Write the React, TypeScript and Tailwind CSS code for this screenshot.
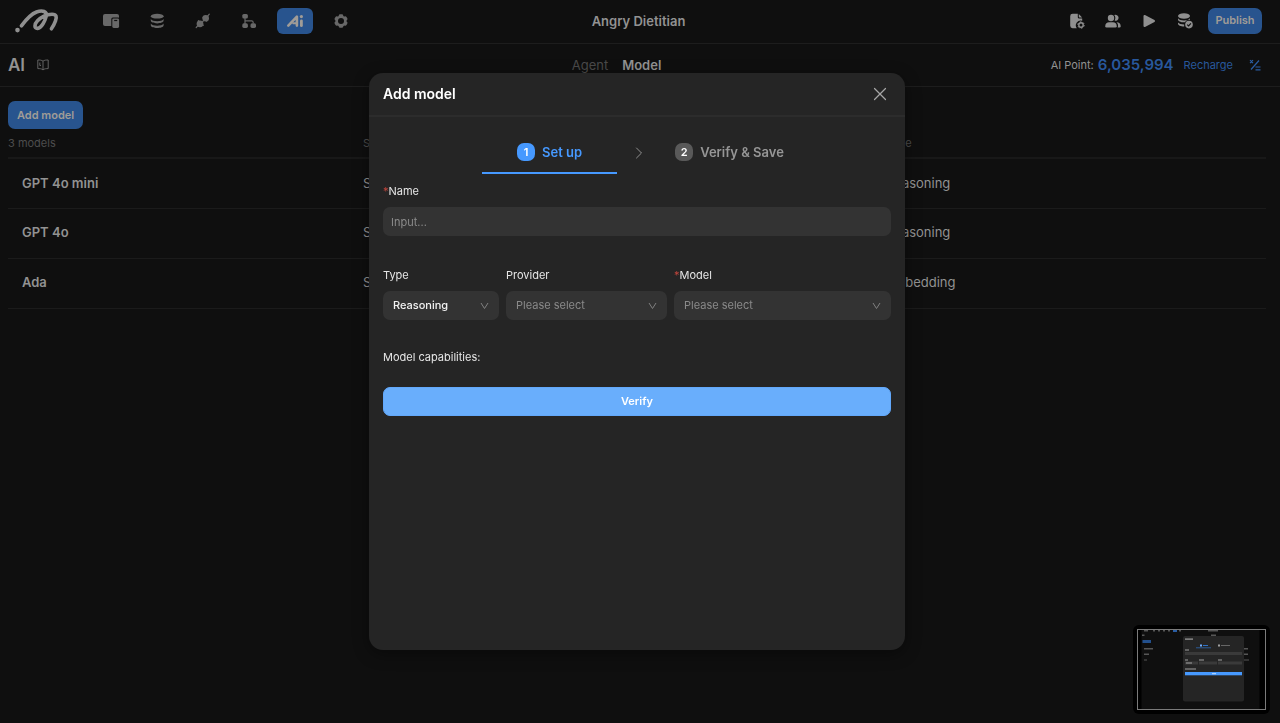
import React from "react";
import { ChevronRight, X } from "lucide-react";

const models = [
  { name: "GPT 4o mini", source: "System", type: "Reasoning" },
  { name: "GPT 4o", source: "System", type: "Reasoning" },
  { name: "Ada", source: "System", type: "Embedding" },
];

function Logo() {
  return (
    <svg width="44" height="26" viewBox="15 8 44 26" fill="none" aria-hidden="true">
      <circle cx="17.5" cy="30.1" r="2.3" fill="#8f8f8f" />
      <path
        d="M21.4 25.8C25 21 30.500 14.200 36.500 12C42.500 9.800 47.500 11.400 46.200 16.400C45 21 41.500 28 37.600 28.400C34 28.600 34.200 24.200 37.500 20.800C41.500 16.800 46.500 14.400 52 14.300C56.800 14.300 56.800 17.200 55.500 20.800C54.500 23.600 53 26.500 51.400 28.800"
        stroke="#8f8f8f"
        strokeWidth="3.6"
        strokeLinecap="round"
        strokeLinejoin="round"
      />
    </svg>
  );
}

function PagesIcon() {
  return (
    <svg width="18" height="16" viewBox="101 14 18 16" aria-hidden="true">
      <rect x="102" y="15" width="16" height="12" rx="2" fill="#686868" />
      <rect x="110.3" y="18.4" width="8.6" height="11.6" rx="1.6" fill="#0f0f0f" />
      <rect x="111.3" y="19.4" width="6.8" height="9.6" rx="1.4" fill="#686868" />
      <path d="M113.2 21.5h3" stroke="#0f0f0f" strokeWidth="1.2" />
    </svg>
  );
}

function DatabaseIcon() {
  return (
    <svg width="16" height="16" viewBox="148 13 16 16" fill="none" aria-hidden="true">
      <ellipse cx="156.2" cy="16.2" rx="6.4" ry="2.4" fill="#686868" />
      <path
        d="M149.800 19c1.500 3 11.300 3 12.800 0v1.600c0 3.700-12.800 3.700-12.800 0zM149.800 23.600c1.500 3 11.300 3 12.800 0v1.600c0 3.700-12.800 3.700-12.800 0z"
        fill="#686868"
      />
    </svg>
  );
}

function PlugIcon() {
  return (
    <svg width="16" height="16" viewBox="195 13 16 16" aria-hidden="true">
      <g fill="#686868">
        <circle cx="205.700" cy="18.300" r="3.300" />
        <circle cx="200" cy="23.800" r="3.400" />
      </g>
      <path d="M207 16.900l2.300-2.700M196.200 27.500l2-2.100M203 17.500l3.700 3.700M198.400 20.700l4.800 4.600M202.300 22l1.300-1.300" stroke="#686868" strokeWidth="1.200" strokeLinecap="round" />
    </svg>
  );
}

function FlowIcon() {
  return (
    <svg width="16" height="16" viewBox="241 13 16 16" aria-hidden="true">
      <g fill="#686868">
        <rect x="242.3" y="14" width="5.6" height="4.600" rx="1.6" />
        <rect x="242.3" y="23.300" width="5.6" height="4.600" rx="1.6" />
        <rect x="250.500" y="23.300" width="5.500" height="4.600" rx="1.6" />
      </g>
      <path d="M245 18v6M245 20.9h6.600q1.600 0 1.600 1.600v1" fill="none" stroke="#686868" strokeWidth="1.2" />
    </svg>
  );
}

function AiIcon() {
  return (
    <svg width="18" height="14" viewBox="287 14 18 14" fill="none" stroke="#a09c97" strokeLinecap="round" aria-hidden="true">
      <path d="M289.3 25.6L297.9 16.6V25.6" strokeWidth="2.6" strokeLinejoin="round" />
      <path d="M294.2 23.2h2.6" strokeWidth="2" />
      <path d="M302.4 20.8v4.9" strokeWidth="2.8" />
      <circle cx="302.4" cy="16.6" r="1.6" fill="#a09c97" stroke="none" />
    </svg>
  );
}

function GearIcon() {
  return (
    <svg width="16" height="16" viewBox="0 0 16 16" aria-hidden="true">
      <g fill="#686868">
        <rect x="5.800" y="1.200" width="4.400" height="13.600" rx="1.400" />
        <rect x="5.800" y="1.200" width="4.400" height="13.600" rx="1.400" transform="rotate(60 8 8)" />
        <rect x="5.800" y="1.200" width="4.400" height="13.600" rx="1.400" transform="rotate(120 8 8)" />
        <circle cx="8" cy="8" r="5.600" />
      </g>
      <circle cx="8" cy="8" r="3" fill="#0f0f0f" />
    </svg>
  );
}

function FileGearIcon() {
  return (
    <svg width="18" height="16" viewBox="-1 0 18 16" aria-hidden="true">
      <path d="M3.6.8h5.2v3.400a1.400 1.400 0 0 0 1.400 1.400h3v2.200a4.800 4.800 0 0 0-5.400 7.400H3.600A2.400 2.400 0 0 1 1.200 12.800V3.200A2.400 2.400 0 0 1 3.600.8z" fill="#8f8f8f" />
      <path d="M9.800 1l3.300 3.500h-2.500a.8.8 0 0 1-.8-.8z" fill="#8f8f8f" />
      <circle cx="12" cy="12" r="2.200" fill="none" stroke="#8f8f8f" strokeWidth="1.400" />
      <circle cx="12" cy="12" r="3.200" fill="none" stroke="#8f8f8f" strokeWidth="1" strokeDasharray="1.680 1.670" />
    </svg>
  );
}

function PeopleIcon() {
  return (
    <svg width="18" height="16" viewBox="0 0 18 16" fill="#8f8f8f" aria-hidden="true">
      <circle cx="7" cy="5" r="3.200" />
      <path d="M1.200 13.200c0-2.800 1.800-4 3.800-4h4c2.200 0 3.800 1.200 3.800 4 0 .8-.4 1.200-1.200 1.200H2.400c-.8 0-1.200-.4-1.200-1.200z" />
      <path d="M10.200 2.100a3 3 0 1 1 .4 5.500 4.800 4.800 0 0 0-.4-5.500z" />
      <path d="M12.400 9.200c2.800 0 4.300 1.300 4.300 4 0 .8-.4 1.200-1 1.200h-2c.8-2 .2-4-1.300-5.200z" />
    </svg>
  );
}

function PlayIcon() {
  return (
    <svg width="18" height="14" viewBox="-2 0 18 14" aria-hidden="true">
      <path d="M2.500 2v10L12 7z" fill="#8f8f8f" stroke="#8f8f8f" strokeWidth="2" strokeLinejoin="round" />
    </svg>
  );
}

function DatabaseCheckIcon() {
  return (
    <svg width="18" height="18" viewBox="0 0 18 18" aria-hidden="true">
      <g fill="#8f8f8f">
        <ellipse cx="8" cy="4" rx="6" ry="2.800" />
        <path d="M2 6.200c1.500 3 10.500 3 12 0v1.600c-2.200 0-4 .8-5 2.400-3.800.3-7-1-7-2.800z" />
        <path d="M2 10.400c.8 1.200 3.400 2 6.200 2v2.200C4.600 14.600 2 13.400 2 11.800z" />
        <circle cx="13" cy="12.600" r="3.800" />
      </g>
      <path d="M11.200 12.600l1.400 1.300 2.300-2.500" fill="none" stroke="#0f0f0f" strokeWidth="1.200" />
    </svg>
  );
}

function BookIcon() {
  return (
    <svg width="12" height="12" viewBox="0 0 12 12" fill="none" stroke="#636363" strokeWidth="1" aria-hidden="true">
      <path d="M6 2.200C4.600 1 2.600 1 .8 1v8.600c1.800 0 3.800 0 5.200 1.300 1.400-1.300 3.400-1.300 5.200-1.300V1C9.400 1 7.400 1 6 2.200zM6 2.200v8.700M2.800 3.500v3h1.200" />
    </svg>
  );
}

function RateIcon() {
  return (
    <svg width="12" height="12" viewBox="0 0 12 12" fill="none" stroke="#2a5da3" strokeWidth="1.200" aria-hidden="true">
      <path d="M1 1.200l3 3M4 1.200l-3 3M10 1.500L2 10.500M6.500 8h5M6.500 10.800h5" />
    </svg>
  );
}

function Caret() {
  return (
    <svg className="pointer-events-none absolute top-1/2 right-2.5 -translate-y-1/2" width="9" height="8" viewBox="0 0 9 8" fill="none" aria-hidden="true">
      <path d="M1 1l3.500 5.500L8 1" stroke="#808080" strokeWidth="1" />
    </svg>
  );
}

function FieldLabel({ id, text, required }: { id: string; text: string; required?: boolean }) {
  return (
    <label htmlFor={id} className="flex text-[11px] leading-4 text-[#e6e6e6]">
      {required && <span className="text-[#c0453c]">*</span>}
      <span>{text}</span>
    </label>
  );
}

function SelectField(props: { id: string; label: string; options: string[]; required?: boolean; filled?: boolean; className: string }) {
  return (
    <div className={props.className}>
      <FieldLabel id={props.id} text={props.label} required={props.required} />
      <div className="relative mt-2">
        <select
          id={props.id}
          className={
            props.filled
              ? "h-[29px] w-full appearance-none rounded-[7px] bg-[#333333] pr-6 pl-2.5 text-[11px] font-medium text-[#f2f2f2]"
              : "h-[29px] w-full appearance-none rounded-[7px] bg-[#333333] pr-6 pl-2.5 text-[11px] text-[#8a8a8a]"
          }
        >
          {props.options.map((o) => (
            <option key={o}>{o}</option>
          ))}
        </select>
        <Caret />
      </div>
    </div>
  );
}

function Preview() {
  return (
    <div className="fixed right-2.5 bottom-[9px] rounded-md bg-black p-[3px]">
      <svg width="131" height="83" viewBox="0 0 131 83" role="img" aria-label="Screen preview">
        <rect x="1.500" y="1.500" width="128" height="80" fill="#000000" stroke="#7a7a7a" />
        <rect x="5.500" y="2" width="118" height="79" fill="#0f0f0f" />
        <g fill="#565656">
          <rect x="8" y="2" width="4" height="1.500" />
          <rect x="17" y="2" width="2" height="1.500" />
          <rect x="22" y="2" width="2" height="1.500" />
          <rect x="27" y="2" width="2" height="1.500" />
          <rect x="32" y="2" width="2" height="1.500" />
          <rect x="43" y="2" width="2" height="1.500" />
          <rect x="72" y="2" width="10" height="1.500" />
          <rect x="6" y="6.500" width="2.500" height="1.500" />
          <rect x="75" y="6.500" width="5" height="1.500" />
          <rect x="8" y="20" width="9" height="1.500" />
          <rect x="8" y="25.500" width="5" height="1.500" />
          <rect x="8" y="31.500" width="3" height="1" />
          <rect x="107" y="20" width="5" height="1.500" />
          <rect x="107" y="25.500" width="5" height="1.500" />
          <rect x="107" y="31.500" width="6" height="1" />
        </g>
        <rect x="37" y="2" width="4" height="2" fill="#2a5da3" />
        <rect x="6.500" y="12" width="8.500" height="3" fill="#23508d" />
        <rect x="47" y="8" width="61" height="65.500" rx="2" fill="#252525" />
        <g fill="#a0a0a0">
          <rect x="49" y="10.500" width="8" height="1.200" />
          <rect x="82" y="16.500" width="2" height="2" />
          <rect x="85" y="17" width="9" height="1" fill="#666666" />
          <rect x="49" y="21.500" width="4" height="1" />
          <rect x="49" y="31.500" width="3" height="1" />
          <rect x="63" y="31.500" width="5" height="1" />
          <rect x="82" y="31.500" width="4" height="1" />
          <rect x="49" y="40.500" width="11" height="1" />
        </g>
        <rect x="64" y="16.500" width="2" height="2" fill="#70aeff" />
        <rect x="67" y="17" width="5" height="1" fill="#2f72c8" />
        <rect x="60" y="19.500" width="15" height=".7" fill="#2f72c8" />
        <g fill="#3a3a3a">
          <rect x="49" y="24" width="57" height="3" />
          <rect x="49" y="33.500" width="13" height="3" />
          <rect x="63" y="33.500" width="18" height="3" />
          <rect x="82" y="33.500" width="24" height="3" />
        </g>
        <rect x="50" y="34.500" width="6" height="1" fill="#a0a0a0" />
        <rect x="49" y="44" width="57" height="3.300" fill="#4699ff" />
        <rect x="76" y="45.200" width="4" height="1" fill="#c0deff" />
      </svg>
    </div>
  );
}

export default function App() {
  const iconButton = "flex h-[26px] w-9 items-center justify-center rounded-md";
  return (
    <div className="min-h-screen bg-[#0f0f0f] font-['Inter','Liberation_Sans',sans-serif] text-[#929292]">
      <header className="grid h-11 grid-cols-[1fr_auto_1fr] items-center border-b border-[#1d1d1d] pr-[18px] pb-0.5 pl-[15px]">
        <div className="flex items-center">
          <Logo />
          <nav aria-label="Main" className="ml-[34px] flex items-center gap-2.5">
            <button className={iconButton} aria-label="Pages"><PagesIcon /></button>
            <button className={iconButton} aria-label="Data"><DatabaseIcon /></button>
            <button className={iconButton} aria-label="Integrations"><PlugIcon /></button>
            <button className={iconButton} aria-label="Flows"><FlowIcon /></button>
            <button className="flex h-[26px] w-9 items-center justify-center rounded-md bg-[#28548e]" aria-label="AI"><AiIcon /></button>
            <button className={iconButton} aria-label="Settings"><GearIcon /></button>
          </nav>
        </div>
        <p className="text-[13px] leading-5 font-semibold">Angry Dietitian</p>
        <div className="flex items-center justify-end gap-[18px]">
          <button aria-label="File settings"><FileGearIcon /></button>
          <button aria-label="Members"><PeopleIcon /></button>
          <button aria-label="Run"><PlayIcon /></button>
          <button aria-label="Sync data"><DatabaseCheckIcon /></button>
          <button className="-ml-1 h-[26px] w-[54px] rounded-[7px] bg-[#28548e] text-[11px] font-semibold text-[#a09c97]">Publish</button>
        </div>
      </header>

      <div className="grid h-[43px] grid-cols-[1fr_auto_1fr] items-center border-b border-[#1d1d1d] pr-[19px] pl-2">
        <div className="flex items-center gap-3">
          <h1 className="text-[17px] leading-6 font-semibold">AI</h1>
          <button aria-label="Documentation"><BookIcon /></button>
        </div>
        <nav aria-label="Section" className="mr-9 flex gap-3.5 text-[13px] leading-5">
          <a href="#agent" className="text-[#4a4a4a]">Agent</a>
          <a href="#model" className="font-semibold">Model</a>
        </nav>
        <div className="flex items-center justify-end">
          <span className="text-[11px]">AI Point:</span>
          <span className="ml-1 text-[15px] font-semibold text-[#28589c]">6,035,994</span>
          <a href="#recharge" className="ml-2.5 text-[11px] text-[#28589c]">Recharge</a>
          <button className="ml-4" aria-label="Rates"><RateIcon /></button>
        </div>
      </div>

      <main className="pt-3.5 pr-3.5 pl-2">
        <button className="block h-7 rounded-[7px] bg-[#28548e] px-[9px] text-[11px] font-semibold text-[#a09c97]">Add model</button>
        <table className="w-full table-fixed text-left">
          <thead>
            <tr className="h-[29px] border-b-2 border-[#181818] text-[11px] text-[#4d4d4d]">
              <th className="w-[355px] font-normal">3 models</th>
              <th className="w-[523px] font-normal">Source</th>
              <th className="font-normal">Type</th>
            </tr>
          </thead>
          <tbody>
            {models.map((m) => (
              <tr key={m.name} className="h-[50px] border-b border-[#1b1b1b] text-[13px]">
                <td className="pl-3.5 font-semibold">{m.name}</td>
                <td>{m.source}</td>
                <td>{m.type}</td>
              </tr>
            ))}
          </tbody>
        </table>
      </main>

      <div className="fixed inset-0 flex items-start justify-center pt-[73px] pr-1.5">
        <section role="dialog" aria-modal="true" aria-labelledby="dialog-title" className="min-h-[577px] w-[536px] rounded-[14px] bg-[#252525] shadow-[0_4px_16px_rgba(0,0,0,0.4)]">
          <div className="flex h-11 items-center justify-between border-b-2 border-[#2c2c2c] pr-3.5 pl-3.5">
            <h2 id="dialog-title" className="text-sm font-semibold text-white">Add model</h2>
            <button aria-label="Close"><X size={22} strokeWidth={1.3} color="#a6a6a6" /></button>
          </div>
          <ol className="flex justify-center pt-3.5 text-[13px] leading-5 font-semibold">
            <li aria-current="step" className="flex h-[43px] items-center gap-[7px] border-b-2 border-[#4699ff] px-[35px] text-[#4699ff]">
              <span className="flex size-[18px] items-center justify-center rounded-[7px] bg-[#4699ff] text-[11px] text-white">1</span>
              Set up
            </li>
            <li aria-hidden="true" className="flex h-[43px] w-11 items-center justify-center">
              <ChevronRight size={20} strokeWidth={1.2} color="#909090" />
            </li>
            <li className="flex h-[43px] items-center gap-[7px] border-b-2 border-transparent pr-2 pl-3.5 text-[#969696]">
              <span className="flex size-[18px] items-center justify-center rounded-[7px] bg-[#595959] text-[11px] text-white">2</span>
              Verify &amp; Save
            </li>
          </ol>
          <form className="px-3.5 pt-[9px]">
            <FieldLabel id="name" text="Name" required />
            <input id="name" placeholder="Input..." className="mt-2 block h-[29px] w-full rounded-[7px] bg-[#333333] px-2 text-[11px] text-white placeholder:text-[#8a8a8a]" />
            <div className="mt-[31px] flex gap-[7px]">
              <SelectField id="type" label="Type" options={["Reasoning", "Embedding"]} filled className="w-[116px]" />
              <SelectField id="provider" label="Provider" options={["Please select"]} className="w-[161px]" />
              <SelectField id="model" label="Model" options={["Please select"]} required className="flex-1" />
            </div>
            <p className="mt-[29px] text-[11px] leading-4 text-[#e6e6e6]">Model capabilities:</p>
            <button type="button" className="mt-[22px] block h-[29px] w-full rounded-[7px] border border-[#62a8fb] bg-[#69aefc] text-[11px] font-semibold text-white">Verify</button>
          </form>
        </section>
      </div>

      <Preview />
    </div>
  );
}
